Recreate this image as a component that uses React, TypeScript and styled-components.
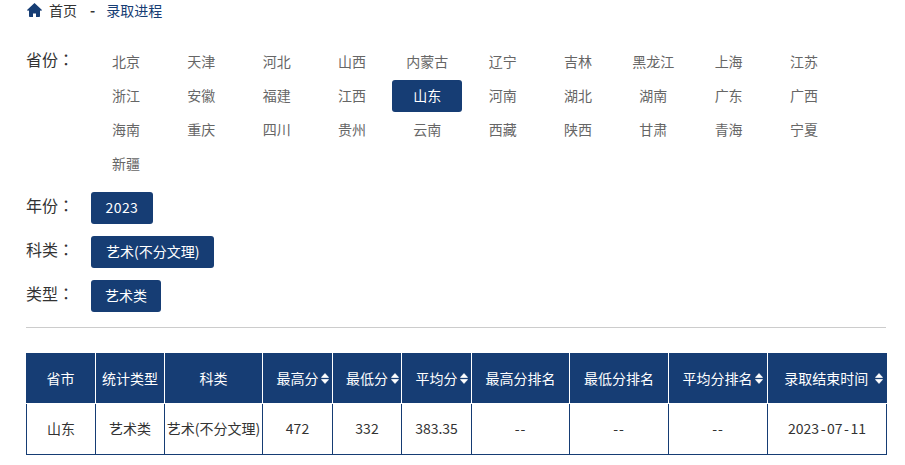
import React from 'react'
import styled, { createGlobalStyle } from 'styled-components'

const NAVY = '#163d74'

const provinces = [
  '北京', '天津', '河北', '山西', '内蒙古', '辽宁', '吉林', '黑龙江', '上海', '江苏',
  '浙江', '安徽', '福建', '江西', '山东', '河南', '湖北', '湖南', '广东', '广西',
  '海南', '重庆', '四川', '贵州', '云南', '西藏', '陕西', '甘肃', '青海', '宁夏',
  '新疆',
]

const columns = [
  { title: '省市', width: 69 },
  { title: '统计类型', width: 69 },
  { title: '科类', width: 98 },
  { title: '最高分', width: 70, sort: true },
  { title: '最低分', width: 69, sort: true },
  { title: '平均分', width: 70, sort: true },
  { title: '最高分排名', width: 98 },
  { title: '最低分排名', width: 99 },
  { title: '平均分排名', width: 99, sort: true },
  { title: '录取结束时间', width: 119, sort: true, wide: true },
]

const GlobalStyle = createGlobalStyle`
  html, body {
    margin: 0;
    padding: 0;
    background: #fff;
    font-family: "Noto Sans CJK SC", "Noto Sans", sans-serif;
    color: #333;
  }
`

const Page = styled.div`
  width: 861px;
  margin-left: 26px;
`

const Crumbs = styled.div`
  display: flex;
  align-items: center;
  height: 20px;
  font-size: 14px;
  line-height: 18px;
  color: #333;
`

const HomeIcon = styled.svg`
  width: 15px;
  height: 14px;
  margin: 0 7px 0 1px;
  fill: ${NAVY};
`

const Dash = styled.span`
  margin: 0 11px 0 13px;
  font-weight: 700;
`

const CrumbCurrent = styled.span`
  color: ${NAVY};
`

const FilterRow = styled.div<{ $top: number }>`
  display: flex;
  margin-top: ${(p) => p.$top}px;
`

const FilterLabel = styled.div`
  width: 65px;
  flex: none;
  font-size: 16px;
  line-height: 26px;
  height: 32px;
  color: #333;
`

// the full-width colon sits centred in the reference, as in the TC cut
const Colon = styled.span`
  font-family: "Noto Sans CJK TC", sans-serif;
`

const ProvinceGrid = styled.div`
  display: grid;
  grid-template-columns: repeat(10, 70px);
  column-gap: 5.33px;
  row-gap: 2px;
`

const Province = styled.div<{ $active?: boolean }>`
  height: 32px;
  line-height: 30px;
  text-align: center;
  font-size: 14px;
  border-radius: 3px;
  color: ${(p) => (p.$active ? '#fff' : '#666')};
  background: ${(p) => (p.$active ? NAVY : 'transparent')};
`

const Chip = styled.div<{ $pad: number; $track?: number }>`
  height: 32px;
  line-height: 30px;
  padding: 0 ${(p) => p.$pad}px;
  font-size: 14px;
  letter-spacing: ${(p) => p.$track ?? 0}px;
  border-radius: 3px;
  color: #fff;
  background: ${NAVY};
`

const Rule = styled.hr`
  margin: 15px 0 25px;
  width: 860px;
  border: 0;
  border-top: 1px solid #ccc;
`

const Table = styled.table`
  width: 860px;
  table-layout: fixed;
  border-collapse: collapse;
  font-size: 14px;
`

const Th = styled.th`
  height: 50px;
  padding: 0;
  background: ${NAVY};
  color: #fff;
  font-weight: 400;
  font-size: 14px;
  text-align: center;
  white-space: nowrap;
  border-left: 1px solid #fff;
  border-bottom: 1px solid #fff;
  &:first-child {
    border-left-color: ${NAVY};
    padding-right: 1px;
  }
  &:nth-last-child(2) {
    padding-right: 1px;
  }
  &:last-child {
    padding-right: 2px;
  }
`

const ThLabel = styled.span`
  position: relative;
  display: inline-block;
`

const SortIcon = styled.svg<{ $wide?: boolean }>`
  position: absolute;
  left: 100%;
  top: 50%;
  width: 8px;
  height: 11px;
  margin-top: -5px;
  margin-left: ${(p) => (p.$wide ? '7px' : '2.5px')};
  fill: #fff;
  stroke: #fff;
  stroke-width: 0.8;
  stroke-linejoin: round;
`

const Td = styled.td`
  height: 51px;
  padding: 0 0 2px;
  box-sizing: border-box;
  text-align: center;
  white-space: nowrap;
  font-size: 14px;
  color: #333;
  border: 1px solid ${NAVY};
`

const Dashes = styled.span`
  letter-spacing: 1px;
`

const DateHyphen = styled.span`
  margin: 0 1.5px;
`

const Sort = ({ wide }: { wide?: boolean }) => (
  <SortIcon $wide={wide} viewBox="0 0 8 11">
    <path d="M4 0.6 L7.5 4.4 H0.5 Z M4 10.4 L0.5 6.6 H7.5 Z" />
  </SortIcon>
)

export default function App() {
  return (
    <>
      <GlobalStyle />
      <Page>
        <Crumbs>
          <HomeIcon viewBox="0 0 15 14">
            <path d="M7.5 0 L15 7 L14 8 L13 7.2 V13.2 Q13 14 12.2 14 H9 V10.5 H6 V14 H2.8 Q2 14 2 13.2 V7.2 L1 8 L0 7 Z" />
          </HomeIcon>
          <span>首页</span>
          <Dash>-</Dash>
          <CrumbCurrent>录取进程</CrumbCurrent>
        </Crumbs>

        <FilterRow $top={26}>
          <FilterLabel>省份<Colon>：</Colon></FilterLabel>
          <ProvinceGrid>
            {provinces.map((name) => (
              <Province key={name} $active={name === '山东'}>
                {name}
              </Province>
            ))}
          </ProvinceGrid>
        </FilterRow>
        <FilterRow $top={12}>
          <FilterLabel>年份<Colon>：</Colon></FilterLabel>
          <Chip $pad={14.6} $track={0.4}>2023</Chip>
        </FilterRow>
        <FilterRow $top={12}>
          <FilterLabel>科类<Colon>：</Colon></FilterLabel>
          <Chip $pad={15}>艺术(不分文理)</Chip>
        </FilterRow>
        <FilterRow $top={12}>
          <FilterLabel>类型<Colon>：</Colon></FilterLabel>
          <Chip $pad={14}>艺术类</Chip>
        </FilterRow>
        <Rule />

        <Table>
          <colgroup>
            {columns.map((c) => (
              <col key={c.title} style={{ width: c.width }} />
            ))}
          </colgroup>
          <thead>
            <tr>
              {columns.map((c) => (
                <Th key={c.title}>
                  <ThLabel>
                    {c.title}
                    {c.sort && <Sort wide={c.wide} />}
                  </ThLabel>
                </Th>
              ))}
            </tr>
          </thead>
          <tbody>
            <tr>
              <Td>山东</Td>
              <Td>艺术类</Td>
              <Td>艺术(不分文理)</Td>
              <Td>472</Td>
              <Td>332</Td>
              <Td>383.35</Td>
              <Td><Dashes>--</Dashes></Td>
              <Td><Dashes>--</Dashes></Td>
              <Td><Dashes>--</Dashes></Td>
              <Td>2023<DateHyphen>-</DateHyphen>07<DateHyphen>-</DateHyphen>11</Td>
            </tr>
          </tbody>
        </Table>
      </Page>
    </>
  )
}
